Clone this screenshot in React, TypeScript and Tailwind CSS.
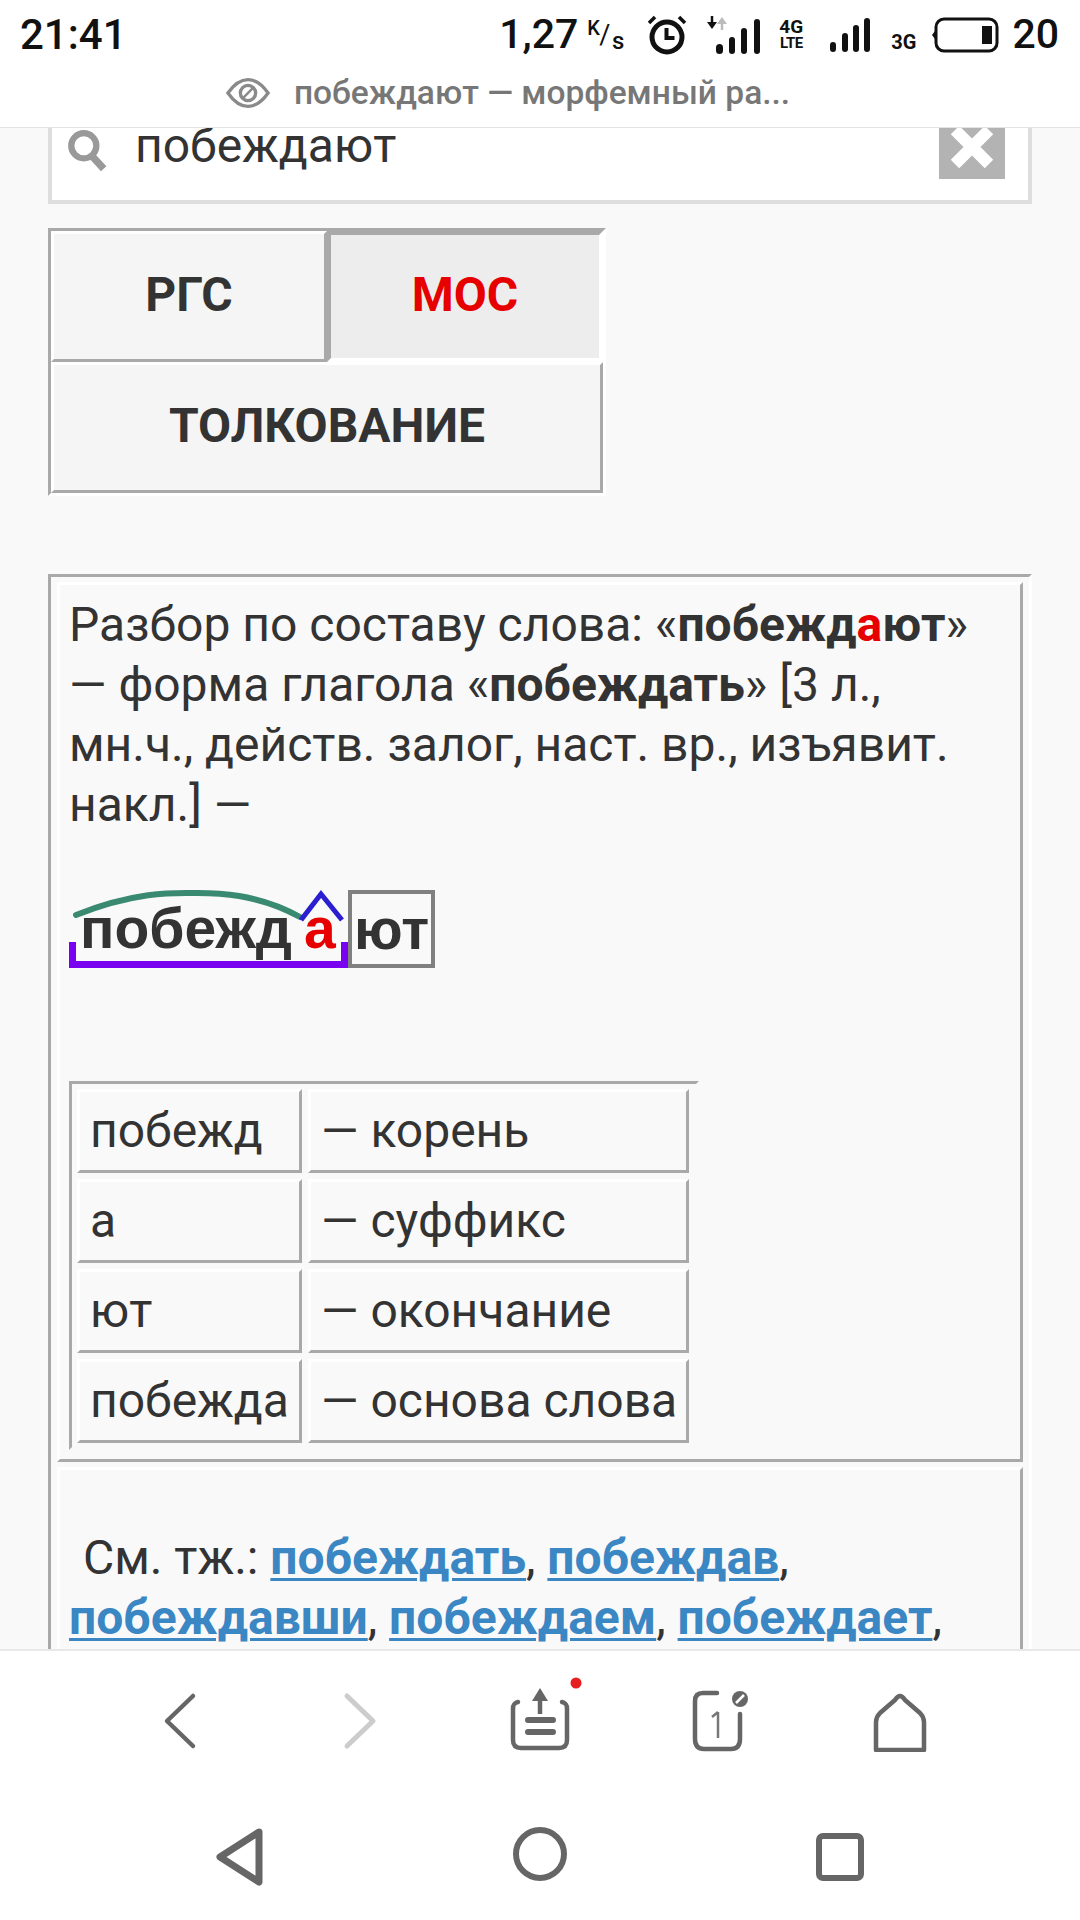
import { ReactNode } from 'react';

const bars = [
  { h: 10, x: 0 },
  { h: 19, x: 11 },
  { h: 27, x: 22 },
  { h: 34, x: 33 },
];

function Signal() {
  return (
    <svg width="46" height="36" viewBox="0 0 46 36" className="shrink-0">
      {bars.map((b) => (
        <rect key={b.x} x={b.x + (b.x === 0 ? 1 : 2)} y={35 - b.h} width="6" height={b.h} rx="3" fill="#111" />
      ))}
    </svg>
  );
}

function StatusBar() {
  return (
    <div className="h-[65px] shrink-0 bg-white flex items-center pl-[20px] pr-[21px] pt-[4px] text-[#111] font-medium">
      <span className="text-[42px] leading-none">21:41</span>
      <div className="ml-auto flex items-center">
        <span className="text-[41px] leading-none">1,27</span>
        <span className="relative ml-[9px] w-[37px] h-[32px] text-[#111]">
          <span className="absolute left-0 top-[-1px] text-[20px] leading-none font-medium">K</span>
          <span className="absolute left-[12px] top-[3px] text-[27px] leading-none font-normal">/</span>
          <span className="absolute right-0 bottom-[-2px] text-[24px] leading-none font-medium">s</span>
        </span>
        <svg width="42" height="40" viewBox="0 0 42 40" className="ml-[22px]">
          <circle cx="21" cy="22" r="15" fill="none" stroke="#111" strokeWidth="5" />
          <path d="M20.5 13v10h8" fill="none" stroke="#111" strokeWidth="4" />
          <path d="M3 8 9 2M39 8 33 2" fill="none" stroke="#111" strokeWidth="3.5" />
        </svg>
        <svg width="58" height="38" viewBox="0 0 58 38" className="ml-[19px]">
          <path d="M5 0v7" stroke="#111" strokeWidth="2.5" />
          <path d="M0 6h10l-5 7z" fill="#111" />
          <path d="M15 14V7" stroke="#bbb" strokeWidth="2.5" />
          <path d="M10 8h10L15 1z" fill="#bbb" />
          <rect x="9" y="28" width="7" height="10" rx="3.5" fill="#111" />
          <rect x="22" y="21" width="6" height="17" rx="3" fill="#111" />
          <rect x="34" y="12" width="6" height="26" rx="3" fill="#111" />
          <rect x="47" y="3" width="6" height="35" rx="3" fill="#111" />
        </svg>
        <div className="ml-[13px] flex flex-col items-center font-bold leading-none w-[26px]">
          <span className="text-[19px] leading-[18px]">4G</span>
          <span className="text-[15px] leading-[15px] tracking-[-0.5px]">LTE</span>
        </div>
        <div className="ml-[25px]">
          <Signal />
        </div>
        <span className="ml-[16px] mt-[15px] text-[20px] leading-none font-bold">3G</span>
        <svg width="68" height="36" viewBox="0 0 68 36" className="ml-[15px]">
          <path d="M4 14 1 18l3 4z" fill="#111" />
          <rect x="5" y="2" width="61" height="32" rx="8" fill="none" stroke="#111" strokeWidth="3" />
          <rect x="51" y="9" width="10" height="18" fill="#111" />
        </svg>
        <span className="ml-[13px] text-[41px] leading-none">20</span>
      </div>
    </div>
  );
}

function TitleBar() {
  return (
    <div className="h-[63px] shrink-0 bg-white border-b border-[#e3e3e3] flex items-center justify-center gap-[24px] pr-[64px] pb-[7px]">
      <svg width="44" height="32" viewBox="0 0 46 32">
        <path d="M2 16C9 6 16 2 23 2s14 4 21 14c-7 10-14 14-21 14S9 26 2 16z" fill="none" stroke="#8a8a8a" strokeWidth="3.5" />
        <circle cx="23" cy="16" r="8" fill="none" stroke="#8a8a8a" strokeWidth="3.5" />
        <path d="m18 21 10-10" stroke="#8a8a8a" strokeWidth="2.5" />
      </svg>
      <span className="text-[33.5px] leading-none font-medium text-[#777]">побеждают — морфемный ра...</span>
    </div>
  );
}

function SearchBox() {
  return (
    <div className="mx-[48px] h-[76px] bg-white border-x-4 border-b-4 border-[#dedede] flex items-start">
      <svg width="46" height="42" viewBox="0 0 44 40" className="ml-[13px] mt-[2px]">
        <circle cx="18" cy="15" r="12" fill="none" stroke="#999" strokeWidth="6" />
        <path d="m26 25 11 12" stroke="#999" strokeWidth="7" />
      </svg>
      <span className="ml-[24px] mt-[-12px] text-[48px] leading-[60px] text-[#333]">побеждают</span>
      <div className="ml-auto mr-[23px] w-[66px] h-[51px] bg-[#b3b3b3] flex items-center justify-center overflow-hidden">
        <svg width="46" height="46" viewBox="0 0 46 46" className="mt-[-14px]">
          <path d="M6 6l34 34M40 6 6 40" stroke="#fff" strokeWidth="12" />
        </svg>
      </div>
    </div>
  );
}

function TabCell({ children, active, className }: { children: ReactNode; active?: boolean; className?: string }) {
  return (
    <div
      className={
        active
          ? `flex items-center justify-center pb-[3px] border-4 border-t-[#a9a9a9] border-l-[#a9a9a9] border-r-white border-b-white bg-[#ededed] text-[#e60000] ${className}`
          : `flex items-center justify-center pb-[3px] border-[3px] border-t-white border-l-white border-r-[#a9a9a9] border-b-[#a9a9a9] bg-[#f5f5f5] text-[#333] ${className}`
      }
    >
      {children}
    </div>
  );
}

function Tabs() {
  return (
    <div className="mt-[24px] ml-[48px] w-[558px] h-[268px] border-[3px] border-t-[#a9a9a9] border-l-[#a9a9a9] border-r-white border-b-white grid grid-cols-[276px_1fr] grid-rows-2 text-[48px] font-bold">
      <TabCell>РГС</TabCell>
      <TabCell active>МОС</TabCell>
      <TabCell className="col-span-2">ТОЛКОВАНИЕ</TabCell>
    </div>
  );
}

function MorphWord() {
  return (
    <div className="flex mt-[55px] h-[78px] font-['Liberation_Sans',sans-serif] font-bold text-[57px] leading-none text-[#333]">
      <div className="relative flex w-[279px] items-end pb-[11px] pl-[11px]">
        <span className="w-[224px]">побежд</span>
        <span className="text-[#e60000]">а</span>
        {/* root arc and suffix caret */}
        <svg width="280" height="34" viewBox="0 0 280 34" className="absolute left-0 top-0 overflow-visible">
          <path d="M7 25C70 0 110 3 128 3s60 0 103 24" fill="none" stroke="#3a8a72" strokeWidth="6" strokeLinecap="round" />
          <path d="M232 30 252 4l21 26" fill="none" stroke="#2a1fd0" strokeWidth="5" />
        </svg>
        {/* stem bracket */}
        <div className="absolute left-0 right-0 bottom-0 h-[26px] border-x-[7px] border-b-[7px] border-[#7a00f0]" />
      </div>
      <div className="w-[87px] border-4 border-[#808080] flex items-center justify-center">
        <span>ют</span>
      </div>
    </div>
  );
}

const rows = [
  ['побежд', '— корень'],
  ['а', '— суффикс'],
  ['ют', '— окончание'],
  ['побежда', '— основа слова'],
];

function MorphTable() {
  return (
    <div className="mt-[113px] w-[630px] h-[369px] border-[3px] border-t-[#a9a9a9] border-l-[#a9a9a9] border-r-[#f9f9f9] border-b-[#f9f9f9] p-[5px] grid grid-cols-[225px_381px] gap-x-[6px] gap-y-[6px] auto-rows-[84px]">
      {rows.map(([a, b]) => [
        <div key={a} className="border-[3px] border-t-white border-l-white border-r-[#a9a9a9] border-b-[#a9a9a9] flex items-center pl-[10px] text-[#333]">
          {a}
        </div>,
        <div key={b} className="border-[3px] border-t-white border-l-white border-r-[#a9a9a9] border-b-[#a9a9a9] flex items-center pl-[10px] text-[#333]">
          {b}
        </div>,
      ])}
    </div>
  );
}

function Link({ children }: { children: ReactNode }) {
  return <a className="font-bold text-[#3a87c4] underline decoration-[3px] underline-offset-[4px]">{children}</a>;
}

function Article() {
  return (
    <div className="mt-[78px] mx-[48px] border-[3px] border-t-[#a9a9a9] border-l-[#a9a9a9] border-r-white border-b-white pt-[5px] pl-[6px] pr-[6px] h-[1100px] text-[48px] leading-[60px] text-[#333]">
      <div className="h-[880px] border-[3px] border-t-white border-l-white border-r-[#a9a9a9] border-b-[#a9a9a9] pl-[9px] pr-[12px] pt-[10px]">
        <p>
          Разбор по составу слова: «<b>побежд<span className="text-[#e60000]">а</span>ют</b>» — форма глагола «<b>побеждать</b>» [3 л., мн.ч., действ. залог, наст. вр., изъявит. накл.] —
        </p>
        <MorphWord />
        <MorphTable />
      </div>
      <div className="mt-[5px] border-[3px] border-t-white border-l-white border-r-[#a9a9a9] border-b-[#a9a9a9] pl-[9px] pr-[12px] pt-[58px] h-[300px]">
        <p>
          &nbsp;<span className="ml-[2px]">См. тж.:</span> <Link>побеждать</Link>, <Link>побеждав</Link>, <Link>побеждавши</Link>, <Link>побеждаем</Link>, <Link>побеждает</Link>,
        </p>
      </div>
    </div>
  );
}

function Toolbar() {
  return (
    <div className="h-[144px] px-[90px] grid grid-cols-5 items-center text-[#666] pb-[4px]">
      <div className="flex justify-center">
        <svg width="36" height="60" viewBox="0 0 36 60">
          <path d="M31 5 5 30l26 25" fill="none" stroke="#666" strokeWidth="4.5" strokeLinecap="round" strokeLinejoin="round" />
        </svg>
      </div>
      <div className="flex justify-center">
        <svg width="36" height="60" viewBox="0 0 36 60">
          <path d="M5 5l26 25L5 55" fill="none" stroke="#ccc" strokeWidth="5" strokeLinecap="round" strokeLinejoin="round" />
        </svg>
      </div>
      <div className="flex justify-center">
        <svg width="80" height="70" viewBox="0 0 80 70" className="overflow-visible">
          <path d="M18 16c-4 1-5 3-5 7v31c0 6 3 8 8 8h38c5 0 8-2 8-8V23c0-4-1-6-5-7" fill="none" stroke="#666" strokeWidth="4.5" strokeLinecap="round" />
          <path d="M40 6v22" stroke="#666" strokeWidth="4.5" />
          <path d="M32 15 40 2l8 13z" fill="#666" />
          <path d="M28 34h25M28 46h25" stroke="#666" strokeWidth="6" strokeLinecap="round" />
          <circle cx="76" cy="-3" r="5.5" fill="#e62020" />
        </svg>
      </div>
      <div className="flex justify-center">
        <svg width="62" height="62" viewBox="0 0 62 62">
          <path d="M28 3H14C8 3 6 6 6 11v38c0 7 3 10 9 10h27c6 0 9-3 9-10V24" fill="none" stroke="#666" strokeWidth="4.5" strokeLinecap="round" />
          <path d="M29 22v26M29 22l-6 5" fill="none" stroke="#777" strokeWidth="2.5" />
          <circle cx="51" cy="9" r="8" fill="#666" />
          <path d="m47 13 8-8" stroke="#fff" strokeWidth="2.5" />
        </svg>
      </div>
      <div className="flex justify-center">
        <svg width="58" height="62" viewBox="0 0 58 62">
          <path d="M29 6c-2 0-3 1-5 4L9 23c-3 3-4 5-4 9v28h48V32c0-4-1-6-4-9L34 10c-2-3-3-4-5-4z" fill="none" stroke="#666" strokeWidth="4.5" strokeLinejoin="round" />
        </svg>
      </div>
    </div>
  );
}

function NavBar() {
  return (
    <div className="flex-1 px-[90px] grid grid-cols-3 items-start pt-[33px]">
      <div className="flex justify-center">
        <svg width="56" height="58" viewBox="0 0 56 58" className="ml-[4px]">
          <path d="M45 4 6 29l39 25z" fill="none" stroke="#666" strokeWidth="7" strokeLinejoin="round" />
        </svg>
      </div>
      <div className="flex justify-center">
        <svg width="56" height="58" viewBox="0 0 56 58" className="mt-[-3px]">
          <circle cx="28" cy="29" r="24" fill="none" stroke="#666" strokeWidth="6" />
        </svg>
      </div>
      <div className="flex justify-center">
        <svg width="56" height="58" viewBox="0 0 56 58">
          <rect x="7" y="8" width="42" height="42" rx="4" fill="none" stroke="#666" strokeWidth="6" />
        </svg>
      </div>
    </div>
  );
}

export default function App() {
  return (
    <div className="w-[1080px] h-[1920px] flex flex-col bg-white font-['Roboto',sans-serif] overflow-hidden">
      <StatusBar />
      <TitleBar />
      <div className="h-[1521px] shrink-0 bg-[#f9f9f9] overflow-hidden">
        <SearchBox />
        <Tabs />
        <Article />
      </div>
      <div className="flex-1 flex flex-col border-t-2 border-[#e8e8e8]">
        <Toolbar />
        <NavBar />
      </div>
    </div>
  );
}
